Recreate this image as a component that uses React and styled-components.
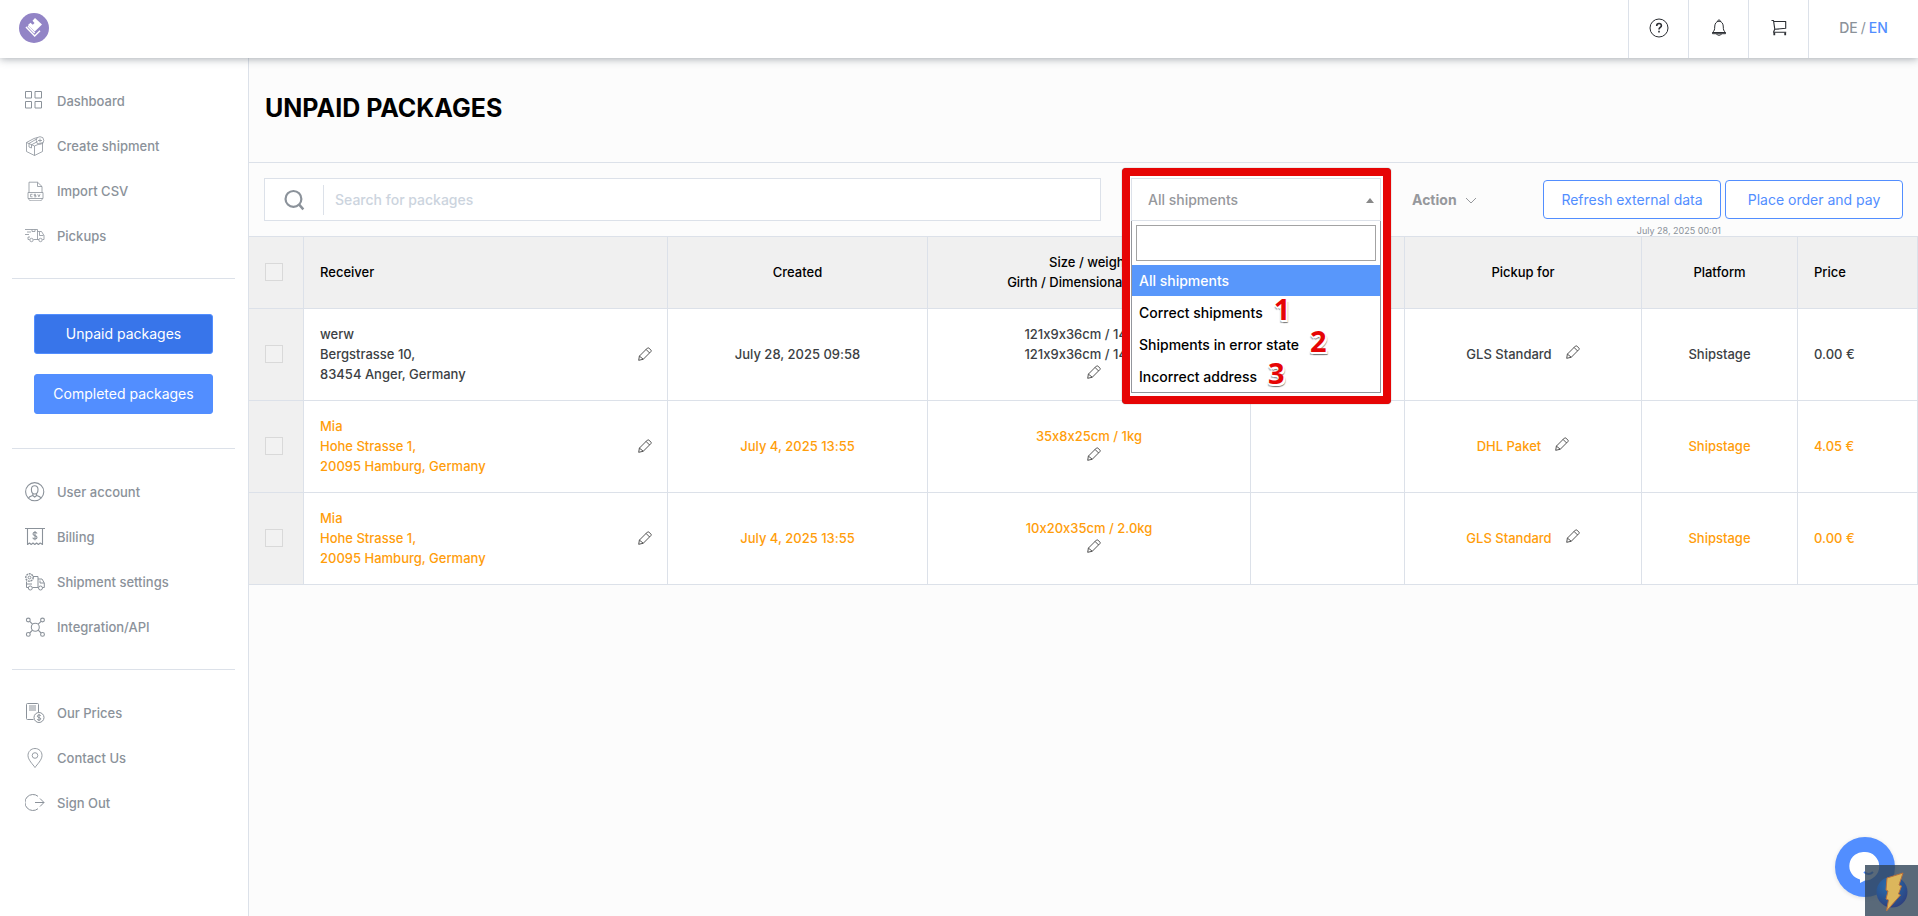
import React from "react";
import styled, { createGlobalStyle, css } from "styled-components";

const line = "#dce1e9";
const muted = "#8b929a";
const blue = "#528eff";
const orange = "#ff9d0a";

const GlobalStyle = createGlobalStyle`
  *, *::before, *::after { box-sizing: border-box; }
  body { margin: 0; background: #fcfcfc; font-family: Inter, "Liberation Sans", sans-serif; font-size: 14px; color: #3c3f44; }
  button, input, select { font: inherit; color: inherit; }
`;

const Page = styled.div`
  min-height: 100vh;
  display: flex;
  flex-direction: column;
`;

const TopBar = styled.header`
  position: relative;
  z-index: 5;
  height: 58px;
  display: flex;
  background: #fff;
  box-shadow: 0 1px 8px rgba(60, 70, 85, 0.45);
`;

const Brand = styled.a`
  display: flex;
  align-items: center;
  margin-right: auto;
  padding: 0 19px 2px;
`;

const TopButton = styled.button`
  width: 60px;
  padding: 0 0 2px;
  border: 0;
  border-left: 1px solid ${line};
  background: none;
  display: grid;
  place-items: center;
  color: #2b2e33;
`;

const Languages = styled.nav`
  width: 110px;
  border-left: 1px solid ${line};
  display: flex;
  align-items: center;
  justify-content: center;
  gap: 3px;
  color: ${muted};
  padding-bottom: 3px;
`;

const Language = styled.a`
  color: ${(p) => (p.$active ? blue : "inherit")};
  font-weight: 500;
  text-decoration: none;
`;

const Body = styled.div`
  flex: 1;
  display: flex;
`;

const Sidebar = styled.aside`
  flex: 0 0 249px;
  padding: 20px 13px 20px 12px;
  background: #fff;
  border-right: 1px solid ${line};
`;

const Menu = styled.nav`
  display: flex;
  flex-direction: column;
`;

const MenuLink = styled.a`
  height: 45px;
  display: flex;
  align-items: center;
  gap: 12px;
  padding-left: 13px;
  font-size: 13px;
  font-weight: 500;
  color: ${muted};
  text-decoration: none;
  svg { flex: none; }
`;

const Divider = styled.hr`
  margin: 20px 0;
  border: 0;
  border-top: 1px solid ${line};
`;

const PackageTabs = styled.div`
  display: flex;
  flex-direction: column;
  gap: 20px;
  padding: 15px 22px 14px;
`;

const PackageTab = styled.button`
  height: 40px;
  padding: 0 0 2px;
  border: 1px solid ${blue};
  border-radius: 3px;
  background: ${(p) => (p.$active ? "#3875ea" : blue)};
  color: #fff;
`;

const Main = styled.main`
  flex: 1;
  min-width: 0;
`;

const TitleRow = styled.div`
  height: 105px;
  padding: 34px 16px;
  border-bottom: 1px solid ${line};
`;

const Title = styled.h1`
  margin: 0;
  font-size: 25px;
  line-height: 32px;
  font-weight: 700;
  color: #000;
`;

const Toolbar = styled.div`
  display: flex;
  align-items: flex-start;
  padding: 15px 15px 0;
`;

const SearchBox = styled.label`
  flex: 1;
  height: 43px;
  display: flex;
  align-items: center;
  border: 1px solid ${line};
  background: #fff;
  color: ${muted};
  svg { margin: 0 18px 0 18px; }
`;

const SearchInput = styled.input`
  flex: 1;
  height: 30px;
  padding: 0 11px 1px;
  border: 0;
  border-left: 1px solid ${line};
  background: none;
  outline: none;
  font-weight: 500;
  &::placeholder { color: #ccd4de; opacity: 1; }
`;

const Filter = styled.div`
  position: relative;
  z-index: 2;
  width: 250px;
  margin: 0 31px 0 30px;
`;

const Highlight = styled.div`
  position: absolute;
  inset: -10px -10px auto -9px;
  height: 236px;
  border: 8px solid #e60505;
  border-radius: 4px;
  background: #fff;
  box-shadow: 0 0 1px #555;
`;

const FilterField = styled.div`
  position: relative;
  height: 43px;
  display: grid;
  align-items: center;
  svg { position: absolute; right: 7px; top: 20px; pointer-events: none; }
`;

const FilterSelect = styled.select`
  appearance: none;
  width: 100%;
  height: 43px;
  padding: 0 16px 1px;
  border: 1px solid ${line};
  border-radius: 0;
  background: #fff;
  font-weight: 500;
  color: #96989c;
`;

const FilterPanel = styled.div`
  position: absolute;
  top: 43px;
  left: 0;
  right: 0;
  border: 1px solid #93969c;
  border-top: 0;
  background: #fff;
`;

const FilterSearch = styled.input`
  display: block;
  width: calc(100% - 8px);
  height: 36px;
  margin: 4px;
  border: 1px solid #a3a3a3;
  border-radius: 0;
  outline: none;
`;

const Options = styled.ul`
  margin: 0;
  padding: 0;
  list-style: none;
`;

const Option = styled.li`
  height: ${(p) => (p.$active ? 31 : 32)}px;
  display: flex;
  align-items: center;
  gap: 11px;
  padding: 0 7px;
  font-weight: 500;
  color: ${(p) => (p.$active ? "#fff" : "#000")};
  background: ${(p) => (p.$active ? "#5897fb" : "none")};
`;

const Mark = styled.span`
  margin-bottom: 6px;
  font: 700 29px/30px "Noto Sans", sans-serif;
  color: #e60505;
  text-shadow: 1px 1px 0 #fff, -1px 1px 0 #fff, 2px 2px 0 #fff, 0 2px 0 #fff, 2px 3px 1px #777, -1px 3px 1px #aaa;
`;

const ActionMenu = styled.button`
  width: 131px;
  height: 43px;
  padding: 0 0 1px;
  border: 0;
  background: none;
  display: flex;
  align-items: center;
  gap: 8px;
  font-weight: 700;
  color: #96989c;
  svg { margin-top: 3px; }
`;

const Commands = styled.div`
  display: flex;
  gap: 4px;
  padding-top: 2px;
`;

const Command = styled.div`
  width: 178px;
  display: flex;
  flex-direction: column;
`;

const OutlineButton = styled.button`
  height: 39px;
  padding: 0 0 1px;
  border: 1px solid ${blue};
  border-radius: 4px;
  background: #fff;
  color: ${blue};
`;

const UpdatedAt = styled.time`
  margin-top: 7px;
  text-align: right;
  font-size: 9px;
  line-height: 10px;
  color: ${muted};
`;

const Table = styled.table`
  width: 100%;
  table-layout: fixed;
  border-collapse: separate;
  border-spacing: 0;
  border-top: 1px solid ${line};
  font-size: 13px;
  font-weight: 500;
  line-height: 20px;
  font-feature-settings: "calt" 0;
`;

const cell = css`
  padding: 0 16px 1px;
  border-right: 1px solid ${line};
  border-bottom: 1px solid ${line};
  text-align: ${(p) => (p.$left ? "left" : "center")};
`;

const Th = styled.th`
  ${cell}
  height: 72px;
  background: #f0f0f0;
  font-weight: 500;
  color: #000;
`;

const Td = styled.td`
  ${cell}
  height: 92px;
  background: ${(p) => (p.$shaded ? "#f0f0f0" : "#fff")};
  color: ${(p) => (p.$warn ? orange : "#3c3f44")};
`;

const Checkbox = styled.input`
  appearance: none;
  display: block;
  width: 18px;
  height: 18px;
  margin: 0;
  border: 1px solid #d9d9d9;
  background: #f2f2f2;
`;

const Receiver = styled.div`
  display: flex;
  align-items: center;
  justify-content: space-between;
  margin-right: -1px;
`;

const Stack = styled.div`
  display: flex;
  flex-direction: column;
  align-items: center;
  padding-bottom: 4px;
  button { margin-left: 9px; }
`;

const Inline = styled.div`
  display: flex;
  align-items: center;
  justify-content: center;
  gap: 14px;
  button { margin-bottom: 4px; }
`;

const EditButton = styled.button`
  padding: 0;
  border: 0;
  background: none;
  height: 16px;
  display: grid;
  place-items: center;
  color: #333;
`;

const ChatButton = styled.button`
  position: fixed;
  right: 23px;
  bottom: 19px;
  z-index: 6;
  width: 60px;
  height: 60px;
  padding: 0;
  border: 0;
  border-radius: 50%;
  background: ${blue};
  box-shadow: 0 1px 4px rgba(0, 0, 0, 0.12);
`;

const Corner = styled.div`
  position: fixed;
  right: 0;
  bottom: 0;
  z-index: 7;
  width: 53px;
  height: 51px;
  background: rgba(48, 68, 88, 0.8);
`;

const Icon = ({ size = 20, children, width = 1, ...rest }) => (
  <svg width={size} height={size} viewBox="0 0 20 20" fill="none" stroke="currentColor" strokeWidth={width} strokeLinejoin="round" aria-hidden="true" {...rest}>
    {children}
  </svg>
);

const icons = {
  dashboard: (
    <Icon strokeLinejoin="miter">
      <path d="M.5 .5h6v6.500h-6zM10 .5h6.500V7H10zM.5 10.500h6v6.500h-6zM10 10.500h6.500v6.500H10z" />
    </Icon>
  ),
  create: (
    <Icon width={0.8}>
      <path d="M1.500 6.500 9.500 10v9.500l-8-4zM9.500 10l8-3.500v9l-8 4M1.500 6.500l7.500-4L12.500 1.500M4 7.500l7.500-4.500M6.500 8.800l6-3.300M4 7.500V11l2.500 1V8.800" />
      <circle cx="15" cy="4.500" r="3.800" />
      <path d="M15 2.500v4M13 4.500h4" />
    </Icon>
  ),
  csv: (
    <Icon width={0.8}>
      <path d="M4 11.500V1.200h8.500L17 5.500v6M12.500 1.200v4.300H17M4 17.500v1l1 1.300h11l1-1.300v-1M3 11.500h15v6H3z" />
      <path d="M7.500 13.300H5.600v2.500h1.900M11 13.300H9.200v1.200H11v1.300H9.200M12.800 13.300l1.100 2.500 1.100-2.500" />
    </Icon>
  ),
  pickups: (
    <Icon width={0.8}>
      <path d="M0 3.500h12.500v10M2 6h4M0 8.500h4M3 11h2M3 11v2.500h1.500M8.500 13.500h5.500M12.500 5.500h4l2.500 4v4h-1.500M14.500 6v3.500h4M7 3.500v2h3v-2" />
      <circle cx="6.500" cy="14" r="1.700" />
      <circle cx="15.500" cy="14" r="1.700" />
    </Icon>
  ),
  user: (
    <Icon width={1.1}>
      <circle cx="9.700" cy="9.700" r="9.100" />
      <path d="M9.700 3.800c-2.300 0-3.300 1.700-3.300 3.700 0 2.500 1.300 4.500 3.300 4.500s3.300-2 3.300-4.500c0-2-1-3.700-3.300-3.700zM7.800 11.500v2c-2 .7-3.500 1-4.300 2.500M11.600 11.500v2c2 .7 3.500 1 4.300 2.500M7.800 13.500l1.900 1.700 1.900-1.700" />
    </Icon>
  ),
  billing: (
    <Icon width={1.1}>
      <path d="M0 1.500h20M2.500 1.500v16l2-1.500 1.700 1.500L8 16l1.800 1.500L11.600 16l1.800 1.500L15.200 16l2.300 1.500v-16" />
      <path d="M12 6.500c-.3-1-1-1.200-2-1.200-1.200 0-2 .6-2 1.600 0 2.300 4 1.200 4 3.500 0 1-.9 1.600-2 1.600s-2-.4-2.200-1.400M10 4v9.300" />
    </Icon>
  ),
  shipment: (
    <Icon width={1}>
      <circle cx="4.500" cy="5.500" r="3.700" strokeDasharray="2 .7" strokeWidth="1.400" />
      <circle cx="4.500" cy="5.500" r="1.400" />
      <path d="M8 4.500h5v11M1.500 9.500v6h1.500M7.500 15.500h5.500M13 7h4l2.300 4v4.500h-1.800M15 8.500V11h4M2 12h5" />
      <circle cx="5.300" cy="16" r="2" />
      <circle cx="15.500" cy="16" r="2" />
    </Icon>
  ),
  api: (
    <Icon width={1.1}>
      <circle cx="10.300" cy="10.200" r="4" />
      <circle cx="3.300" cy="3" r="1.900" />
      <circle cx="17.500" cy="3" r="1.900" />
      <circle cx="3.300" cy="17.400" r="1.900" />
      <circle cx="17.500" cy="17.400" r="1.900" />
      <path d="M4.700 4.300 7.500 7.200M16.100 4.300l-2.900 2.900M4.700 16l2.800-2.900M16.100 16l-2.900-2.900" />
    </Icon>
  ),
  prices: (
    <Icon width={1}>
      <path d="M8.500 16.500H2.500a1 1 0 0 1-1-1V1.500a1 1 0 0 1 1-1h10a1 1 0 0 1 1 1V9" />
      <path d="M4 3h7M4 5h7M4 7h7" strokeWidth="1.200" />
      <circle cx="14" cy="14.500" r="5" />
      <path d="M15.800 12.800c-.4-.7-1-.8-1.800-.8-1 0-1.700.4-1.700 1.200 0 1.700 3.500 1 3.500 2.700 0 .8-.8 1.200-1.800 1.200s-1.600-.3-1.900-1M14 11v7" />
    </Icon>
  ),
  contact: (
    <Icon width={0.9}>
      <path d="M10 .5c-4 0-7 3-7 7 0 4.500 5 9 7 12 2-3 7-7.500 7-12 0-4-3-7-7-7z" />
      <circle cx="10" cy="7.500" r="2.800" />
    </Icon>
  ),
  signout: (
    <Icon width={1}>
      <path d="M13 3.300A8 8 0 1 0 13 15.700M10 9.500h9M15 5.500l4 4-4 4" />
    </Icon>
  ),
};

const Pencil = () => (
  <Icon size={14} width={1.2}>
    <path d="M1 19l1-6L13.500 1.500a1.500 1.500 0 0 1 2 0l3 3a1.500 1.500 0 0 1 0 2L7.500 17.500zM2 13l5.500 4.500M11.500 3.500l5 5" />
  </Icon>
);

const Edit = () => (
  <EditButton type="button">
    <Pencil />
  </EditButton>
);

const menus = [
  [["dashboard", "Dashboard"], ["create", "Create shipment"], ["csv", "Import CSV"], ["pickups", "Pickups"]],
  [["user", "User account"], ["billing", "Billing"], ["shipment", "Shipment settings"], ["api", "Integration/API"]],
  [["prices", "Our Prices"], ["contact", "Contact Us"], ["signout", "Sign Out"]],
];

const MenuGroup = ({ items }) => (
  <Menu>
    {items.map(([icon, label]) => (
      <MenuLink href="#" key={label}>
        {icons[icon]}
        {label}
      </MenuLink>
    ))}
  </Menu>
);

const options = [
  { label: "All shipments" },
  { label: "Correct shipments", mark: "1" },
  { label: "Shipments in error state", mark: "2" },
  { label: "Incorrect address", mark: "3" },
];

const columns = [55, 364, 260, 323, 154, 237, 156, 120];

const rows = [
  { name: "werw", street: "Bergstrasse 10,", city: "83454 Anger, Germany", created: "July 28, 2025 09:58", sizes: ["121x9x36cm / 14.0kg", "121x9x36cm / 14.0kg"], pickup: "GLS Standard", price: "0.00 €" },
  { name: "Mia", street: "Hohe Strasse 1,", city: "20095 Hamburg, Germany", created: "July 4, 2025 13:55", sizes: ["35x8x25cm / 1kg"], pickup: "DHL Paket", price: "4.05 €", warn: true },
  { name: "Mia", street: "Hohe Strasse 1,", city: "20095 Hamburg, Germany", created: "July 4, 2025 13:55", sizes: ["10x20x35cm / 2.0kg"], pickup: "GLS Standard", price: "0.00 €", warn: true },
];

export default function App() {
  return (
    <Page>
      <GlobalStyle />
      <TopBar>
        <Brand href="#">
          <svg width="30" height="30" viewBox="0 0 30 30" aria-hidden="true">
            <circle cx="15" cy="15" r="15" fill="#9284c6" />
            <path d="M16 5l7 6.500-7.200 7L9 12l2.500-2.300 2.300 2 1.700-1.700-2-2.300z" fill="#fff" />
            <path d="M7 14l8.700 9 5.300-5.300M9 13l6.700 7" fill="none" stroke="#fff" strokeWidth="1.500" />
          </svg>
        </Brand>
        <TopButton type="button">
          <Icon width={1}>
            <circle cx="10" cy="10" r="9" />
            <path d="M7.700 8c0-1.500 1-2.500 2.300-2.500s2.400.9 2.400 2.200c0 1.700-2.400 1.900-2.400 3.800M10 12.800v1.700" strokeWidth="1.600" />
          </Icon>
        </TopButton>
        <TopButton type="button">
          <Icon width={1}>
            <path d="M3.500 14.500c1.900-1.700 2.200-3 2.200-5.500 0-3 1.300-5.800 4.300-5.800s4.300 2.800 4.300 5.800c0 2.500.3 3.800 2.200 5.500zM3.500 14.500v1.200h13v-1.200M8.500 3.500c0-2 3-2 3 0" />
            <path d="M7.500 16c.5 1.700 4.500 1.700 5 0" />
          </Icon>
        </TopButton>
        <TopButton type="button">
          <Icon width={1.1}>
            <path d="M2.500 2.500h2l1.300 8.800 10.900-1V3.500H4.700M5.700 11.300l-1.200 3h12.700" />
            <path d="M5.300 14.500v2.700M16.200 14.500v2.700" strokeWidth="1.800" />
          </Icon>
        </TopButton>
        <Languages>
          <Language href="#">DE</Language>
          <span>/</span>
          <Language href="#" $active>EN</Language>
        </Languages>
      </TopBar>

      <Body>
        <Sidebar>
          <MenuGroup items={menus[0]} />
          <Divider />
          <PackageTabs>
            <PackageTab type="button" $active>Unpaid packages</PackageTab>
            <PackageTab type="button">Completed packages</PackageTab>
          </PackageTabs>
          <Divider />
          <MenuGroup items={menus[1]} />
          <Divider />
          <MenuGroup items={menus[2]} />
        </Sidebar>

        <Main>
          <TitleRow>
            <Title>UNPAID PACKAGES</Title>
          </TitleRow>

          <Toolbar>
            <SearchBox>
              <Icon size={22} width={2}>
                <circle cx="9.500" cy="9" r="7.200" />
                <path d="M14.500 14l4 4.500" strokeWidth="2.200" />
              </Icon>
              <SearchInput type="search" placeholder="Search for packages" />
            </SearchBox>

            <Filter>
              <Highlight />
              <FilterField>
                <FilterSelect defaultValue="All shipments">
                  {options.map((o) => (
                    <option key={o.label}>{o.label}</option>
                  ))}
                </FilterSelect>
                <svg width="8" height="5" viewBox="0 0 8 5" aria-hidden="true">
                  <path d="M0 5l4-5 4 5z" fill="#888" />
                </svg>
              </FilterField>
              <FilterPanel>
                <FilterSearch type="text" />
                <Options role="listbox">
                  {options.map((o, i) => (
                    <Option role="option" aria-selected={i === 0} $active={i === 0} key={o.label}>
                      {o.label}
                      {o.mark && <Mark>{o.mark}</Mark>}
                    </Option>
                  ))}
                </Options>
              </FilterPanel>
            </Filter>

            <ActionMenu type="button">
              Action
              <svg width="12" height="7" viewBox="0 0 12 7" fill="none" stroke="currentColor" aria-hidden="true">
                <path d="M1 1l5 5 5-5" />
              </svg>
            </ActionMenu>

            <Commands>
              <Command>
                <OutlineButton type="button">Refresh external data</OutlineButton>
                <UpdatedAt>July 28, 2025 00:01</UpdatedAt>
              </Command>
              <Command>
                <OutlineButton type="button">Place order and pay</OutlineButton>
              </Command>
            </Commands>
          </Toolbar>

          <Table>
            <colgroup>
              {columns.map((w, i) => (
                <col key={i} width={w} />
              ))}
            </colgroup>
            <thead>
              <tr>
                <Th><Checkbox type="checkbox" /></Th>
                <Th $left>Receiver</Th>
                <Th>Created</Th>
                <Th>Size / weight<br />Girth / Dimensional weight</Th>
                <Th />
                <Th>Pickup for</Th>
                <Th>Platform</Th>
                <Th $left>Price</Th>
              </tr>
            </thead>
            <tbody>
              {rows.map((r, i) => (
                <tr key={i}>
                  <Td $shaded><Checkbox type="checkbox" /></Td>
                  <Td $left $warn={r.warn}>
                    <Receiver>
                      <div>{r.name}<br />{r.street}<br />{r.city}</div>
                      <Edit />
                    </Receiver>
                  </Td>
                  <Td $warn={r.warn}>{r.created}</Td>
                  <Td $warn={r.warn}>
                    <Stack>
                      {r.sizes.map((s, n) => <span key={n}>{s}</span>)}
                      <Edit />
                    </Stack>
                  </Td>
                  <Td />
                  <Td $warn={r.warn}>
                    <Inline>{r.pickup}<Edit /></Inline>
                  </Td>
                  <Td $warn={r.warn}>Shipstage</Td>
                  <Td $left $warn={r.warn}>{r.price}</Td>
                </tr>
              ))}
            </tbody>
          </Table>
        </Main>
      </Body>

      <ChatButton type="button">
        <svg width="60" height="60" viewBox="0 0 60 60" aria-hidden="true">
          <path d="M30 15a14 14 0 0 1 0 28.500L25 46v-3.500A14 14 0 0 1 30 15z" fill="#fff" />
          <path d="M29 35q5 4 9 0" fill="none" stroke={blue} strokeWidth="2" />
        </svg>
      </ChatButton>
      <Corner>
        <svg width="53" height="51" viewBox="0 0 53 51" aria-hidden="true">
          <defs>
            <radialGradient id="orb" cx=".4" cy=".3" r=".8">
              <stop offset="0" stopColor="#2a6fb0" />
              <stop offset=".6" stopColor="#2a5290" />
              <stop offset="1" stopColor="#303a78" />
            </radialGradient>
          </defs>
          <circle cx="27" cy="27" r="15.500" fill="url(#orb)" />
          <path d="M22 13l16-5-4 12 2.500 1-3 8 2 1L21.500 46l2-11-2.500-1 2-8-2-1z" fill="#dcb65c" stroke="#b9703c" strokeWidth="1" />
        </svg>
      </Corner>
    </Page>
  );
}
